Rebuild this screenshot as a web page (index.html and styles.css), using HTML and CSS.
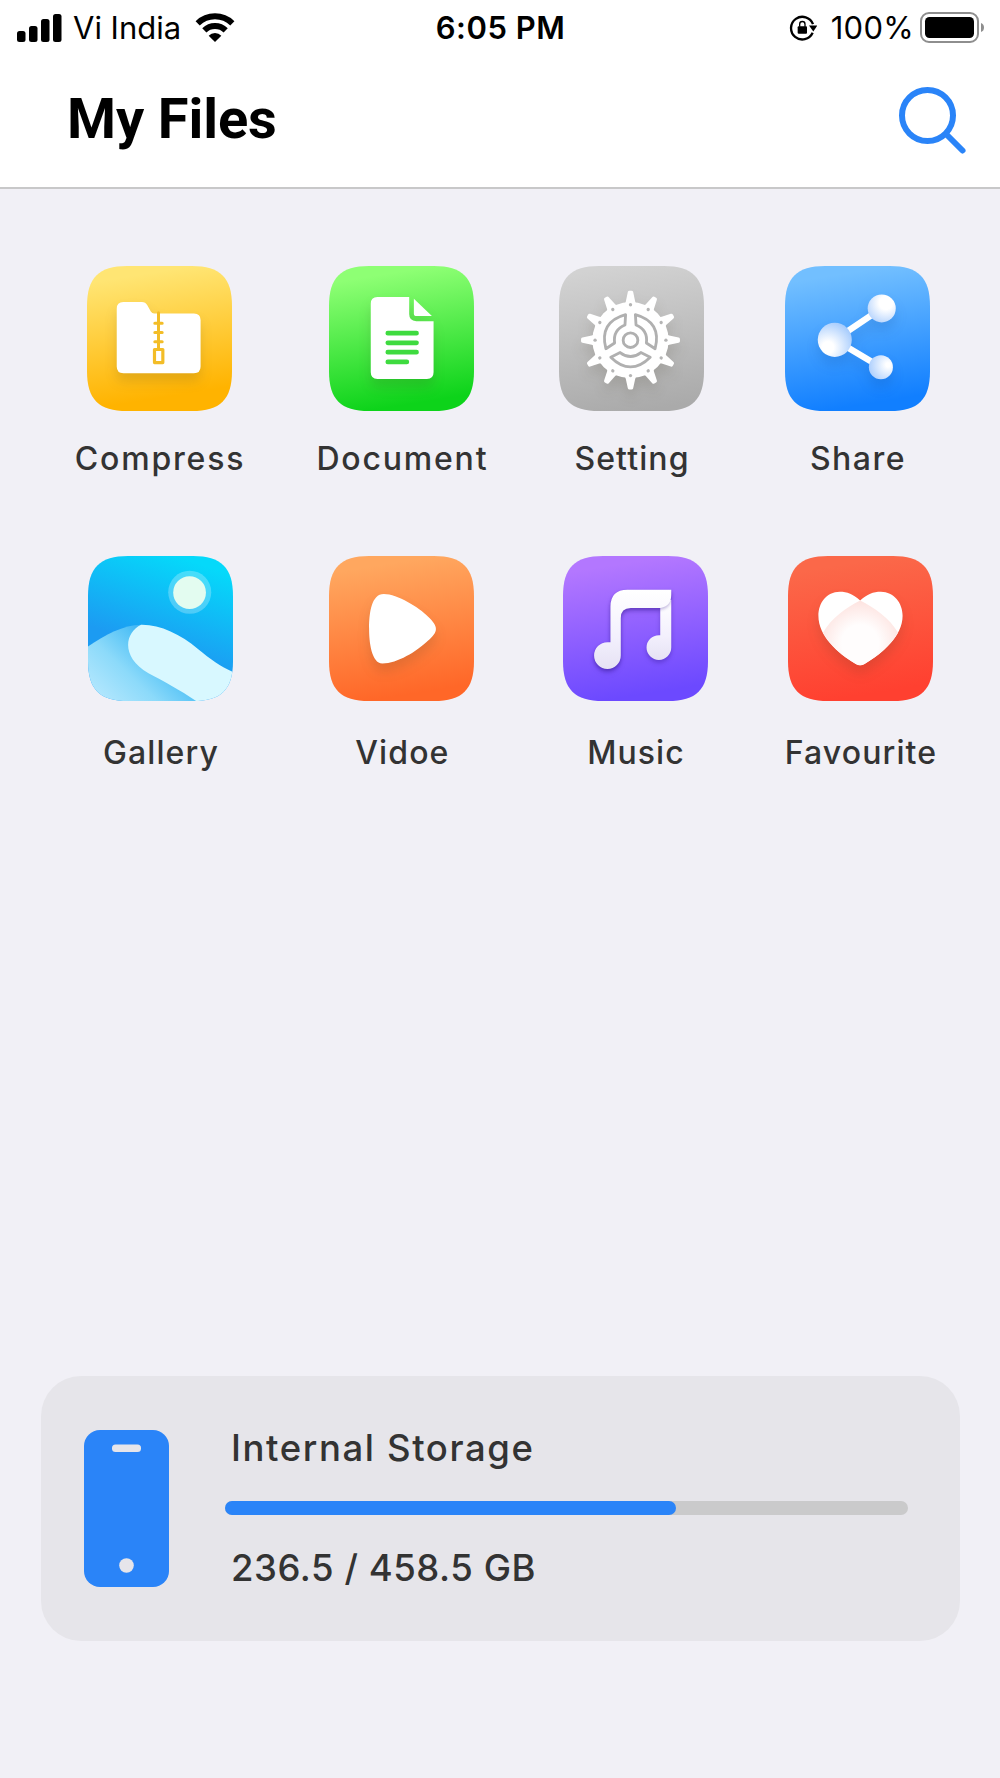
FILE: index.html
```html
<!DOCTYPE html>
<html lang="en">
<head>
  <title>My Files</title>
  <meta charset="UTF-8">
  <link rel="stylesheet" href="styles.css">
</head>
<body>
<div class="screen">
  <div class="statusbar">
    <div class="status-left">
      <svg class="signal" viewBox="0 0 45 28">
        <rect x="0" y="17" width="8.5" height="11" rx="2.5"/>
        <rect x="12" y="12" width="8.5" height="16" rx="2.5"/>
        <rect x="24" y="5" width="8.5" height="23" rx="2.5"/>
        <rect x="36" y="0" width="8.5" height="28" rx="2.5"/>
      </svg>
      <span class="carrier">Vi India</span>
      <svg class="wifi" viewBox="586 37 120 87">
        <path d="M594 68A75 75 0 0 1 698 68M614 89A46 46 0 0 1 678 89" fill="none" stroke="#000" stroke-width="18"/>
        <path d="M646 124L627 105A27 27 0 0 1 665 105Z"/>
      </svg>
    </div>
    <span class="clock">6:05 PM</span>
    <div class="status-right">
      <svg class="lock" viewBox="84 42 84 80">
        <path d="M156 72A34 34 0 1 0 155 98" fill="none" stroke="#000" stroke-width="7"/>
        <path d="M144 76H169L157 94Z"/>
        <rect x="110" y="78" width="28" height="23" rx="3"/>
        <path d="M116 80V72A8 8 0 0 1 132 72V80" fill="none" stroke="#000" stroke-width="4"/>
      </svg>
      <span class="percent">100%</span>
      <svg class="battery" viewBox="0 0 65 31">
        <rect x="1" y="1" width="57" height="29" rx="8" fill="none" stroke="#8e8e8e" stroke-width="2"/>
        <rect x="5" y="5" width="49" height="21" rx="4.5"/>
        <path d="M61 11Q64 12 64 15.500T61 20Z" fill="#8e8e8e"/>
      </svg>
    </div>
  </div>

  <div class="header">
    <h1 class="title">My Files</h1>
    <svg class="search" viewBox="0 0 68 68">
      <circle cx="28.500" cy="28.500" r="25.500"/>
      <path d="M47 47L63.500 63.500"/>
    </svg>
  </div>

  <div class="apps apps-top">
    <div class="app">
      <svg class="tile" viewBox="82 48 434 434">
        <defs>
          <path id="squircle" d="M0 120C0 35 35 0 120 0H314C399 0 434 35 434 120V314C434 399 399 434 314 434H120C35 434 0 399 0 314Z"/>
          <linearGradient id="yellow" x1=".42" y1="0" x2=".58" y2="1"><stop offset=".05" stop-color="#ffe573"/><stop offset=".9" stop-color="#ffb300"/></linearGradient>
        </defs>
        <use href="#squircle" x="82" y="48" fill="url(#yellow)"/>
        <g class="glyph">
          <path fill="#fff" d="M191 156H246Q257 156 263 166L273 184Q277 190 283 190H402Q422 190 422 210V349Q422 369 402 369H191Q171 369 171 349V176Q171 156 191 156Z"/>
          <path d="M296 188V295M285 219.500H307M285 247H307M285 274.500H307" fill="none" stroke="#f3bd27" stroke-width="9" stroke-linecap="round"/>
          <rect x="284" y="298" width="25" height="39" fill="#fff" stroke="#f3bd27" stroke-width="9.500" stroke-linejoin="round"/>
        </g>
      </svg>
      <span class="label compress">Compress</span>
    </div>
    <div class="app">
      <svg class="tile" viewBox="88 48 434 434">
        <linearGradient id="green" x1=".42" y1="0" x2=".58" y2="1"><stop offset=".05" stop-color="#8eff74"/><stop offset=".95" stop-color="#0dd31a"/></linearGradient>
        <use href="#squircle" x="88" y="48" fill="url(#green)"/>
        <g class="glyph">
          <path fill="#fff" d="M233 141H328V192Q328 213 349 213H401V366Q401 386 381 386H233Q213 386 213 366V161Q213 141 233 141Z"/>
          <path fill="#fff" d="M342 146L396 198H350Q342 198 342 190Z"/>
          <path d="M264 249H350M264 278H350M264 306H350M264 335H321" stroke="#3edb3f" stroke-width="14" stroke-linecap="round"/>
        </g>
      </svg>
      <span class="label document">Document</span>
    </div>
    <div class="app">
      <svg class="tile" viewBox="57 48 434 434">
        <defs>
          <linearGradient id="gray" x1=".42" y1="0" x2=".58" y2="1"><stop offset="0" stop-color="#d2d2d2"/><stop offset="1" stop-color="#aaa"/></linearGradient>
          <g id="tooth"><path fill="#fff" d="M-20-100L-14-116L-8-144Q-7-148-3-148H3Q7-148 8-144L14-116L20-100Z"/><circle cy="-106" r="5" fill="#b5b5b5"/></g>
          <path id="pocket" d="M-59 51Q-30 80 0 80T59 51L31 37Q0 61-31 37Z"/>
        </defs>
        <use href="#squircle" x="57" y="48" fill="url(#gray)"/>
        <g class="glyph" transform="translate(271 270)">
          <circle r="114" fill="#fff"/>
          <use href="#tooth"/>
          <use href="#tooth" transform="rotate(30)"/>
          <use href="#tooth" transform="rotate(60)"/>
          <use href="#tooth" transform="rotate(90)"/>
          <use href="#tooth" transform="rotate(120)"/>
          <use href="#tooth" transform="rotate(150)"/>
          <use href="#tooth" transform="rotate(180)"/>
          <use href="#tooth" transform="rotate(210)"/>
          <use href="#tooth" transform="rotate(240)"/>
          <use href="#tooth" transform="rotate(270)"/>
          <use href="#tooth" transform="rotate(300)"/>
          <use href="#tooth" transform="rotate(330)"/>
          <g fill="#fff" stroke="#b0b0b0" stroke-width="8.500" stroke-linejoin="round">
            <use href="#pocket"/>
            <use href="#pocket" transform="rotate(120)"/>
            <use href="#pocket" transform="rotate(240)"/>
            <circle r="22"/>
          </g>
        </g>
      </svg>
      <span class="label setting">Setting</span>
    </div>
    <div class="app">
      <svg class="tile" viewBox="76 48 434 434">
        <linearGradient id="blue" x1=".42" y1="0" x2=".58" y2="1"><stop offset=".05" stop-color="#72bfff"/><stop offset=".95" stop-color="#117fff"/></linearGradient>
        <radialGradient id="ball1" cx=".3" cy=".72" r=".85"><stop offset=".2" stop-color="#fff"/><stop offset="1" stop-color="#9cc6fd"/></radialGradient>
        <radialGradient id="ball2" cx=".65" cy=".3" r=".8"><stop offset=".3" stop-color="#fff"/><stop offset="1" stop-color="#b3d2fd"/></radialGradient>
        <radialGradient id="ball3" cx=".8" cy=".4" r=".9"><stop offset=".1" stop-color="#fff"/><stop offset="1" stop-color="#a3c9fd"/></radialGradient>
        <use href="#squircle" x="76" y="48" fill="url(#blue)"/>
        <g class="glyph cool">
          <path d="M365 175L225 269L363 351" fill="none" stroke="#fff" stroke-width="19"/>
          <circle cx="225" cy="269" r="51" fill="url(#ball1)"/>
          <circle cx="365.500" cy="175" r="42" fill="url(#ball2)"/>
          <circle cx="363" cy="351" r="36" fill="url(#ball3)"/>
        </g>
      </svg>
      <span class="label share">Share</span>
    </div>
  </div>

  <div class="apps apps-bottom">
    <div class="app">
      <svg class="tile" viewBox="84 49 434 434">
        <linearGradient id="sky" x1=".62" y1="0" x2=".4" y2=".62"><stop offset="0" stop-color="#05d9fa"/><stop offset="1" stop-color="#1c9bf2"/></linearGradient>
        <linearGradient id="dune" x1=".1" y1=".9" x2=".85" y2=".35"><stop offset="0" stop-color="#b0e6fd"/><stop offset=".4" stop-color="#8cdafa"/><stop offset=".75" stop-color="#56c3f6"/><stop offset="1" stop-color="#2ea8f3"/></linearGradient>
        <clipPath id="round"><use href="#squircle" x="84" y="49"/></clipPath>
        <g clip-path="url(#round)">
          <rect x="84" y="49" width="434" height="434" fill="url(#sky)"/>
          <circle cx="388.500" cy="157.500" r="64.500" fill="#fff" fill-opacity=".26"/>
          <circle cx="388" cy="158.500" r="49" fill="#e3fcf0"/>
          <path fill="url(#dune)" d="M84 320C135 286 190 255 243 255L330 300L410 484H84Z"/>
          <path fill="#d8f8ff" d="M243 255C195 278 180 350 265 400C310 424 360 450 409 484H518V396C480 380 450 357 414 328C360 283 300 254 243 255Z"/>
        </g>
      </svg>
      <span class="label gallery">Gallery</span>
    </div>
    <div class="app">
      <svg class="tile" viewBox="808 49 434 434">
        <linearGradient id="orange" x1=".42" y1="0" x2=".58" y2="1"><stop offset=".05" stop-color="#ffa75f"/><stop offset=".95" stop-color="#ff6728"/></linearGradient>
        <use href="#squircle" x="808" y="49" fill="url(#orange)"/>
        <path class="glyph" fill="#fff" d="M972 163C1013 163 1078 204 1104 230C1136 260 1136 275 1104 303C1070 335 1013 371 968 371C935 371 928 305 928 267C928 220 935 163 972 163Z"/>
      </svg>
      <span class="label vidoe">Vidoe</span>
    </div>
    <div class="app">
      <svg class="tile" viewBox="69 49 434 434">
        <linearGradient id="purple" x1=".42" y1="0" x2=".58" y2="1"><stop offset=".05" stop-color="#b377ff"/><stop offset=".95" stop-color="#6c49ff"/></linearGradient>
        <linearGradient id="note" x1="0" y1="0" x2="0" y2="1"><stop offset="0" stop-color="#fff"/><stop offset=".6" stop-color="#f3f0fd"/><stop offset="1" stop-color="#e6e2f4"/></linearGradient>
        <use href="#squircle" x="69" y="49" fill="url(#purple)"/>
        <g class="note">
          <path fill="url(#note)" d="M360 180H393V323A37 37 0 1 1 356 286H360Z"/>
          <path class="beam" fill="url(#note)" d="M393 150H262Q211 150 211 201V307H202A40 40 0 1 0 242 347V235Q242 205 272 205H350Q393 205 393 165Z"/>
        </g>
      </svg>
      <span class="label music">Music</span>
    </div>
    <div class="app">
      <svg class="tile" viewBox="85 49 434 434">
        <linearGradient id="red" x1=".42" y1="0" x2=".58" y2="1"><stop offset=".05" stop-color="#fb6849"/><stop offset=".95" stop-color="#ff4030"/></linearGradient>
        <radialGradient id="heart" gradientUnits="userSpaceOnUse" cx="301" cy="310" r="138"><stop offset=".4" stop-color="#fffdfd"/><stop offset="1" stop-color="#fddfdb"/></radialGradient>
        <use href="#squircle" x="85" y="49" fill="url(#red)"/>
        <g class="glyph">
          <path fill="#fff" d="M301 182C280 163 262 156 240 156C200 156 176 190 176 228C176 288 232 340 288 372Q301 380 314 372C370 340 428 288 428 228C428 190 402 156 363 156C340 156 322 163 301 182Z"/>
          <path fill="url(#heart)" d="M301 182C260 202 212 238 190 278C212 318 250 350 288 372Q301 380 314 372C352 350 392 318 414 278C392 238 342 202 301 182Z"/>
        </g>
      </svg>
      <span class="label favourite">Favourite</span>
    </div>
  </div>

  <div class="storage">
    <svg class="phone" viewBox="0 0 85 157">
      <rect width="85" height="157" rx="16" fill="#2a84f8"/>
      <rect x="28" y="14.500" width="29" height="7.500" rx="3.500" fill="#e6e5ea"/>
      <circle cx="42.500" cy="135.500" r="7.300" fill="#e6e5ea"/>
    </svg>
    <div class="storage-info">
      <div class="storage-name">Internal Storage</div>
      <div class="bar"><div class="bar-used" style="width:66%"></div></div>
      <div class="storage-size">236.5 / 458.5 GB</div>
    </div>
  </div>
</div>
</body>
</html>
```
FILE: styles.css
```css
body {
  margin: 0;
  background: #f1f0f6;
  font-family: Inter, "Liberation Sans", sans-serif;
  color: #333;
}

.screen {
  display: flex;
  flex-direction: column;
  box-sizing: border-box;
  height: 1778px;
  padding-bottom: 137.5px;
}

.statusbar {
  display: grid;
  grid-template-columns: 1fr auto 1fr;
  align-items: center;
  height: 55px;
  padding: 0 15px 0 17px;
  background: #fff;
  color: #000;
  font-size: 31px;
  line-height: 40px;
}
.status-left, .status-right {
  display: flex;
  align-items: center;
  height: 52px;
}
.status-right {
  justify-content: flex-end;
}
.carrier, .percent {
  padding-top: 1px;
}
.signal {
  width: 45px;
  height: 28px;
  margin-right: 11px;
}
.wifi {
  width: 40px;
  height: 29px;
  margin-left: 14px;
}
.clock {
  margin-right: 1px;
  font-weight: 600;
  letter-spacing: .5px;
}
.lock {
  width: 28px;
  height: 27px;
  margin-right: 14px;
}
.percent {
  letter-spacing: .3px;
}
.battery {
  width: 65px;
  height: 31px;
  margin-left: 6px;
}

.header {
  display: flex;
  justify-content: space-between;
  height: 132px;
  padding: 0 33px 0 67px;
  background: #fff;
  border-bottom: 2px solid #c8c8c9;
}
.title {
  margin: 31px 0 0;
  color: #000;
  font: bold 56px/66px Roboto, sans-serif;
  letter-spacing: -.1px;
}
.search {
  width: 68px;
  height: 68px;
  margin-top: 31.5px;
  fill: none;
  stroke: #2a84f8;
  stroke-width: 6;
  stroke-linecap: round;
}

.apps {
  display: grid;
}
.apps-top {
  grid-template-columns: 242.4px 229.6px 226px 145px;
  padding: 77px 0 0 87px;
}
.apps-bottom {
  grid-template-columns: 241.4px 233.6px 225px 145px;
  padding: 77.4px 0 0 88px;
}
.app {
  display: flex;
  flex-direction: column;
  align-items: center;
  width: 145px;
}
.tile {
  width: 145px;
  height: 145px;
}
.glyph {
  filter: drop-shadow(0 24px 18px rgba(60, 50, 30, .14));
}
.cool {
  filter: drop-shadow(0 24px 18px rgba(0, 50, 130, .14));
}
.note {
  filter: drop-shadow(0 8px 7px rgba(50, 20, 140, .35));
}
.beam {
  filter: drop-shadow(0 5px 5px rgba(50, 20, 140, .3));
}
.label {
  margin: 28px -1px 0 0;
  font-size: 32px;
  font-weight: 500;
  line-height: 40px;
  letter-spacing: 1.1px;
  white-space: nowrap;
}
.apps-bottom .label {
  margin-top: 31.6px;
}
.compress, .document {
  letter-spacing: 1.8px;
}
.share {
  letter-spacing: 1.5px;
}

.storage {
  display: flex;
  align-items: center;
  box-sizing: border-box;
  width: 919px;
  height: 265px;
  margin: auto 0 0 41px;
  padding: 0 52px 0 43px;
  background: #e6e5ea;
  border-radius: 40px;
}
.phone {
  width: 85px;
  height: 157px;
  margin-right: 56px;
}
.storage-info {
  flex: 1;
}
.storage-name, .storage-size {
  padding-left: 6px;
  font-size: 36.5px;
  font-weight: 500;
  line-height: 44px;
  white-space: nowrap;
}
.storage-name {
  letter-spacing: 1.6px;
}
.storage-size {
  letter-spacing: .55px;
}
.bar {
  height: 14px;
  margin: 31px 0;
  border-radius: 7px;
  background: #cacacb;
}
.bar-used {
  height: 14px;
  border-radius: 7px;
  background: #2a84f8;
}
```
